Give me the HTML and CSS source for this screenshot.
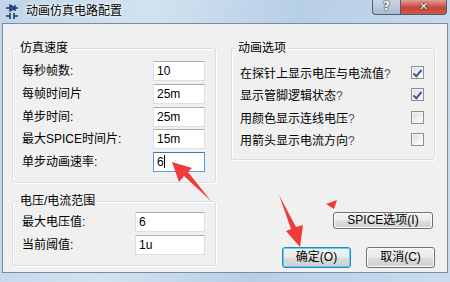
FILE: index.html
```html
<!DOCTYPE html>
<html lang="zh-CN">
<head>
    <meta charset="UTF-8">
    <title>动画仿真电路配置</title>
    <link rel="stylesheet" href="styles.css">
</head>
<body>
    <div class="window">
        <div class="titlebar">
            <svg class="app-icon" width="14" height="16" viewBox="0 0 14 16">
                <path d="M1 4h4M5 1v6l5-3z M10 1v6 M10 4h3" stroke="#1d3b6b" stroke-width="1.4" fill="#2b5aa0"/>
                <path d="M1 12h4 M5 9v6 M9 9v6 M9 12h4" stroke="#1d3b6b" stroke-width="1.6" fill="none"/>
            </svg>
            <span class="title">动画仿真电路配置</span>
            <div class="caption-btns">
                <div class="cap-help">?</div>
                <div class="cap-close">✕</div>
            </div>
        </div>

        <div class="client">
            <div class="col">
                <fieldset class="group speed">
                    <legend>仿真速度</legend>
                    <div class="field-list">
                        <label>每秒帧数:</label><div class="input">10</div>
                        <label>每帧时间片</label><div class="input">25m</div>
                        <label>单步时间:</label><div class="input">25m</div>
                        <label>最大SPICE时间片:</label><div class="input">15m</div>
                        <label>单步动画速率:</label><div class="input focused">6<span class="caret"></span></div>
                    </div>
                </fieldset>

                <fieldset class="group range">
                    <legend>电压/电流范围</legend>
                    <div class="field-list wide">
                        <label>最大电压值:</label><div class="input">6</div>
                        <label>当前阈值:</label><div class="input">1u</div>
                    </div>
                </fieldset>
            </div>

            <div class="col">
                <fieldset class="group anim">
                    <legend>动画选项</legend>
                    <div class="check-list">
                        <div class="check-row"><span>在探针上显示电压与电流值<em>?</em></span><span class="box checked"></span></div>
                        <div class="check-row"><span>显示管脚逻辑状态<em>?</em></span><span class="box checked"></span></div>
                        <div class="check-row"><span>用颜色显示连线电压<em>?</em></span><span class="box"></span></div>
                        <div class="check-row"><span>用箭头显示电流方向<em>?</em></span><span class="box"></span></div>
                    </div>
                </fieldset>

                <div class="btn spice">SPICE选项(I)</div>
                <div class="btn-row">
                    <div class="btn default">确定(O)</div>
                    <div class="btn">取消(C)</div>
                </div>
            </div>
        </div>
    </div>

    <svg class="marks" width="450" height="282" viewBox="0 0 450 282">
        <polygon points="172,162 192,168 188,172 211,201 184,176 179,182" fill="#f23a3a"/>
        <polygon points="279,195 296,227 303,225 300,247 286,231 291,229" fill="#f23a3a"/>
        <polygon points="326,204 337,200 334,209" fill="#f23a3a"/>
    </svg>
</body>
</html>
```

FILE: styles.css
```css
* {
    margin: 0;
    padding: 0;
    box-sizing: border-box;
}

body {
    width: 450px;
    height: 282px;
    overflow: hidden;
    position: relative;
    font-family: "Liberation Sans", "Noto Sans CJK SC", sans-serif;
    font-size: 12px;
    color: #000;
}

.window {
    height: 282px;
    padding: 0 2px 9px 2px;
    background: linear-gradient(100deg, #c0d5ea 0%, #d3e2f1 30%, #b7cfe6 60%, #c9dcef 100%);
    display: flex;
    flex-direction: column;
}

/* title bar */
.titlebar {
    height: 23px;
    display: flex;
    align-items: flex-start;
    position: relative;
}

.app-icon {
    margin: 4px 0 0 3px;
}

.title {
    margin: 3px 0 0 7px;
    line-height: 17px;
    font-size: 12px;
    text-shadow: 0 0 5px #fff, 0 0 3px #fff;
}

.caption-btns {
    margin-left: auto;
    margin-right: 1px;
    display: flex;
}

.cap-help, .cap-close {
    height: 15px;
    border: 1px solid #4d5d73;
    border-top: none;
    color: #fff;
    font-weight: bold;
    text-align: center;
    line-height: 13px;
    font-family: "DejaVu Sans", sans-serif;
    text-shadow: 0 0 2px #223, 0 0 1px #000;
}

.cap-help {
    width: 28px;
    border-right: none;
    border-bottom-left-radius: 4px;
    background: linear-gradient(#c9d6e3, #a9bdd2);
    font-size: 12px;
}

.cap-close {
    width: 47px;
    border-bottom-right-radius: 4px;
    background: linear-gradient(#e0a195, #c7443a 55%, #d05a44);
    font-size: 11px;
}

/* client area */
.client {
    flex: 1;
    background: #f0f0f0;
    border: 1px solid #7d8c9c;
    display: flex;
    gap: 15px;
    padding: 16px 11px 0 9px;
}

.col {
    width: 204px;
    display: flex;
    flex-direction: column;
}

.group {
    border: 1px solid #d5dfe5;
    border-radius: 3px;
    box-shadow: inset 1px 1px 0 #fff, 1px 1px 0 #fff;
    padding: 5px 10px 10px 9px;
}

.group legend {
    line-height: 16px;
    padding: 0 2px;
    margin-left: -4px;
}

.field-list {
    display: grid;
    grid-template-columns: 1fr 52px;
    row-gap: 2.75px;
    align-items: center;
}

.field-list.wide {
    grid-template-columns: 1fr 70px;
    row-gap: 3px;
}

.field-list label {
    line-height: 20px;
}

.input {
    height: 20px;
    background: #fff;
    border: 1px solid #dbdfe6;
    border-top-color: #abadb3;
    padding-left: 3px;
    line-height: 18px;
}

.input.focused {
    border-color: #569de5;
    border-top-color: #3d7bad;
}

.caret {
    display: inline-block;
    width: 1px;
    height: 13px;
    background: #000;
    vertical-align: -2px;
}

.range {
    margin-top: 10px;
    padding-top: 3px;
}

/* animation options */
.anim {
    padding: 6px 10px 9px 8px;
}

.check-list {
    display: flex;
    flex-direction: column;
    gap: 2.5px;
}

.check-row {
    height: 20px;
    display: flex;
    align-items: center;
    justify-content: space-between;
}

.check-row em {
    font-style: normal;
    color: #5a4a7a;
}

.box {
    width: 13px;
    height: 13px;
    border: 1px solid #8e8f8f;
    background: linear-gradient(135deg, #dcdcdc, #fff);
    box-shadow: inset 0 0 0 1px #f4f4f4;
    position: relative;
}

.box.checked::after {
    content: "";
    position: absolute;
    left: 3px;
    top: 1px;
    width: 3px;
    height: 7px;
    border: solid #3c5a9c;
    border-width: 0 2px 2px 0;
    transform: rotate(40deg);
}

/* buttons */
.btn {
    border: 1px solid #707070;
    border-radius: 3px;
    background: linear-gradient(#f2f2f2 0%, #ebebeb 48%, #dddddd 52%, #cfcfcf 100%);
    box-shadow: inset 0 0 0 1px #fcfcfc;
    text-align: center;
}

.spice {
    width: 100px;
    height: 17px;
    line-height: 15px;
    margin: 52px 2px 0 auto;
}

.btn-row {
    display: flex;
    justify-content: flex-end;
    gap: 15px;
    margin-top: 18px;
}

.btn-row .btn {
    width: 69px;
    height: 21px;
    line-height: 19px;
}

.btn.default {
    border-color: #3c7fb1;
    box-shadow: inset 0 0 0 1px #48d8fb;
}

.marks {
    position: absolute;
    left: 0;
    top: 0;
    pointer-events: none;
}
```
